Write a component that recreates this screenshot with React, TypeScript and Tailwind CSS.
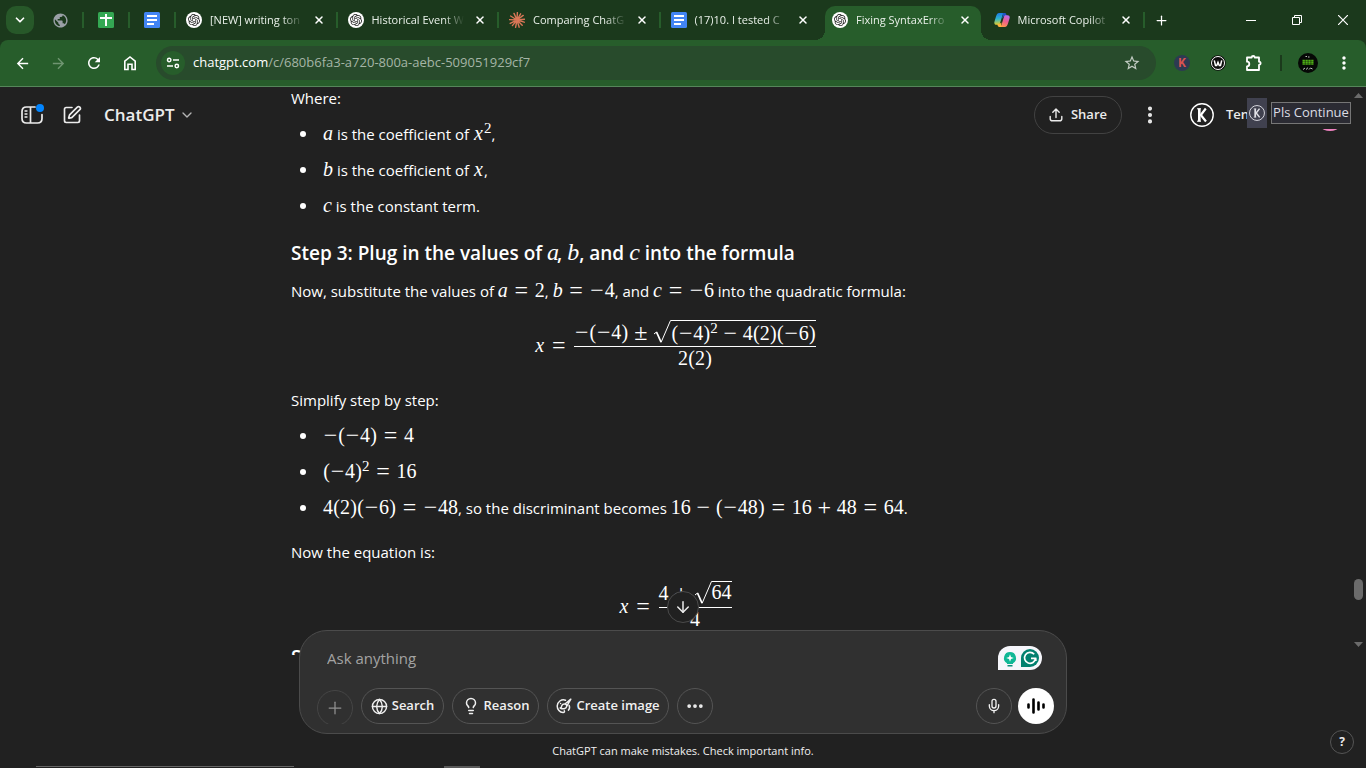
import type { ReactNode } from "react";
import {
  ArrowDown,
  ChevronDown,
  Ellipsis,
  EllipsisVertical,
  Globe,
  Lightbulb,
  Mic,
  Plus,
  SquarePen,
  X,
} from "lucide-react";
import { MdArrowBack, MdArrowForward, MdMoreVert, MdPublic, MdRefresh, MdStarBorder } from "react-icons/md";
import { SiOpenai } from "react-icons/si";

/* ---------- favicons ---------- */

function OpenAiFavicon() {
  return (
    <span className="flex size-4 shrink-0 items-center justify-center rounded-full bg-white text-[#222]">
      <SiOpenai size={12} />
    </span>
  );
}

function DocsFavicon() {
  return (
    <svg viewBox="0 0 16 16" className="size-4 shrink-0" aria-hidden="true">
      <rect width="16" height="16" rx="1.5" fill="#4285f4" />
      <path d="M3 4h10M3 8h10M3 12h7" stroke="#fff" strokeWidth="2" />
    </svg>
  );
}

function SheetsFavicon() {
  return (
    <svg viewBox="0 0 16 16" className="size-4 shrink-0" aria-hidden="true">
      <rect width="16" height="16" rx="1.5" fill="#34a853" />
      <path d="M2 6h12M8 2v12" stroke="#fff" strokeWidth="2" />
    </svg>
  );
}

function ClaudeFavicon() {
  return (
    <svg viewBox="0 0 16 16" className="size-4 shrink-0" aria-hidden="true">
      <path
        d="M8 8 8.4.5M8 8l3.6-6.2M8 8l6.2-4.6M8 8l7.5-.8M8 8l7.2 2.2M8 8l5.2 5.2M8 8l2.2 7.2M8 8l-1.4 7.4M8 8l-4.6 5.6M8 8l-6.8 3.4M8 8 .5 7.6M8 8 1.6 4M8 8 5 1.4"
        stroke="#d97757"
        strokeWidth="1.4"
        strokeLinecap="round"
      />
    </svg>
  );
}

function CopilotFavicon() {
  return (
    <svg viewBox="0 0 16 16" className="size-4 shrink-0" fill="none" aria-hidden="true">
      <defs>
        <linearGradient id="cp-a" x1="3" y1="1" x2="4" y2="13" gradientUnits="userSpaceOnUse">
          <stop stopColor="#1b78e8" />
          <stop offset=".5" stopColor="#2fb6c8" />
          <stop offset="1" stopColor="#f2cf1d" />
        </linearGradient>
        <linearGradient id="cp-b" x1="13" y1="3" x2="8" y2="15" gradientUnits="userSpaceOnUse">
          <stop stopColor="#b56cf0" />
          <stop offset=".5" stopColor="#ee5d8f" />
          <stop offset="1" stopColor="#ff9a4a" />
        </linearGradient>
      </defs>
      <path d="M9.8 1H5.2C3.4 1 2.6 2.6 2 4.5L.5 9.4C-.1 11.5.6 12.8 2.5 12.8h1.7c1 0 1.6-.6 1.9-1.7L8.4 3.4C8.7 2.4 9.2 2 10 2z" fill="url(#cp-a)" />
      <path d="M9.5 1h1.2c1 0 1.4.6 1.7 1.7l.4 1.5H10L8 6.5l.9-3.8C9 1.9 8.8 1.2 8.3 1z" fill="#1f55c4" />
      <path d="M6.2 15h4.6c1.8 0 2.6-1.6 3.2-3.5l1.5-4.9c.6-2.1-.1-3.4-2-3.4h-1.7c-1 0-1.6.6-1.9 1.700l-2.3 7.7C7.3 13.6 6.8 14 6 14z" fill="url(#cp-b)" />
      <path d="M6.5 15H5.3c-1 0-1.4-.6-1.7-1.7l-.3-1L6 11.5l1.5-1-.4 2.8c-.1.8.1 1.5.6 1.7z" fill="#ffb23e" />
    </svg>
  );
}

/* ---------- browser chrome ---------- */

interface TabProps {
  title: string;
  icon: ReactNode;
  active?: boolean;
  divider?: boolean;
}

const TABS: TabProps[] = [
  { title: "[NEW] writing ton", icon: <OpenAiFavicon />, divider: true },
  { title: "Historical Event W", icon: <OpenAiFavicon />, divider: true },
  { title: "Comparing ChatG", icon: <ClaudeFavicon />, divider: true },
  { title: "(17)10. I tested C", icon: <DocsFavicon /> },
  { title: "Fixing SyntaxErro", icon: <OpenAiFavicon />, active: true },
  { title: "Microsoft Copilot", icon: <CopilotFavicon />, divider: true },
];

function Tab({ title, icon, active, divider }: TabProps) {
  return (
    <div className="relative h-full min-w-0 flex-1">
      {active && (
        <>
          <div className="absolute inset-x-[3px] top-1.5 bottom-0 rounded-t-[10px] bg-[#275d2b]" />
          <div className="absolute bottom-0 -left-[7px] size-2.5 bg-[radial-gradient(circle_at_0_0,transparent_10px,#275d2b_10px)]" />
          <div className="absolute -right-[7px] bottom-0 size-2.5 bg-[radial-gradient(circle_at_100%_0,transparent_10px,#275d2b_10px)]" />
        </>
      )}
      <div className="relative flex h-full items-center gap-2 pr-[11px] pl-2.5">
        {icon}
        <span className="min-w-0 flex-1 overflow-hidden text-[11px] leading-4 font-medium whitespace-nowrap text-[#e9f0e9] [mask-image:linear-gradient(to_right,black_78%,transparent)]">
          {title}
        </span>
        <button type="button" aria-label={`Close ${title}`} className="flex size-4 items-center justify-center text-white">
          <X size={12} strokeWidth={3} />
        </button>
      </div>
      {divider && <span className="absolute top-3 right-0 h-4 w-0.5 bg-[#275d2b]" />}
    </div>
  );
}

function PinnedTab({ label, children }: { label: string; children: ReactNode }) {
  return (
    <button type="button" aria-label={label} className="flex h-4 w-[46px] items-center justify-center border-r-2 border-[#275d2b]">
      {children}
    </button>
  );
}

function TabStrip() {
  return (
    <div className="flex h-10 items-center">
      <button type="button" aria-label="Search tabs" className="mr-1 ml-1.5 flex size-7 items-center justify-center rounded-[10px] bg-[#275829] text-white">
        <ChevronDown size={14} strokeWidth={3} />
      </button>
      <PinnedTab label="Web page">
        <MdPublic size={17} className="text-[#9aa0a6]" />
      </PinnedTab>
      <PinnedTab label="Sheets">
        <SheetsFavicon />
      </PinnedTab>
      <PinnedTab label="Docs">
        <DocsFavicon />
      </PinnedTab>
      <div className="flex h-full min-w-0 flex-1">
        {TABS.map((t) => (
          <Tab key={t.title} {...t} />
        ))}
      </div>
      <button type="button" aria-label="New tab" className="flex h-7 w-8 items-center justify-center text-white">
        <Plus size={15} strokeWidth={2} />
      </button>
      <div className="ml-[51px] flex text-white">
        <button type="button" aria-label="Minimize" className="flex h-10 w-[46px] items-center justify-center">
          <svg viewBox="0 0 10 10" className="size-2.5"><path d="M0 5.5h10" stroke="currentColor" /></svg>
        </button>
        <button type="button" aria-label="Restore" className="flex h-10 w-[46px] items-center justify-center">
          <svg viewBox="0 0 10 10" className="size-2.5" fill="none" stroke="currentColor">
            <path d="M.5 2.5h7v7h-7zM2.5 2.5v-2h7v7h-2" />
          </svg>
        </button>
        <button type="button" aria-label="Close" className="flex h-10 w-[46px] items-center justify-center">
          <svg viewBox="0 0 10 10" className="size-2.5"><path d="m0 0 10 10M10 0 0 10" stroke="currentColor" strokeWidth="1.2" /></svg>
        </button>
      </div>
    </div>
  );
}

function ToolButton({ label, children }: { label: string; children: ReactNode }) {
  return (
    <button type="button" aria-label={label} className="flex size-9 items-center justify-center">
      {children}
    </button>
  );
}

function Toolbar() {
  return (
    <div className="flex h-[46px] items-center rounded-t-lg bg-[#275d2b] px-1 text-white">
      <ToolButton label="Back"><MdArrowBack size={17} /></ToolButton>
      <ToolButton label="Forward"><MdArrowForward size={17} className="text-[#6f9571]" /></ToolButton>
      <ToolButton label="Reload"><MdRefresh size={18} /></ToolButton>
      <ToolButton label="Home">
        <svg viewBox="0 0 16 16" className="size-4" fill="none" stroke="currentColor" strokeWidth="1.6">
          <path d="M2.8 6.2 8 2l5.2 4.2v8.3H10V9.2H6v5.3H2.8z" />
        </svg>
      </ToolButton>
      <div className="mx-2 flex h-[34px] min-w-0 flex-1 items-center rounded-full bg-[#284b2c] pr-[15px] pl-[5px]">
        <button type="button" aria-label="View site information" className="flex size-6 items-center justify-center rounded-full bg-[#275d2b]">
          <svg viewBox="0 0 14 14" className="size-3.5" fill="none" stroke="currentColor" strokeWidth="1.5">
            <circle cx="3.2" cy="4" r="1.7" />
            <path d="M7 4h6M1 10h6" />
            <circle cx="10.8" cy="10" r="1.7" />
          </svg>
        </button>
        <div role="textbox" aria-label="Address" className="ml-2 flex-1 truncate text-[13px] text-[#a5b5a6]">
          <span className="text-white">chatgpt.com</span>/c/680b6fa3-a720-800a-aebc-509051929cf7
        </div>
        <button type="button" aria-label="Bookmark this tab">
          <MdStarBorder size={18} className="text-[#c3cdc4]" />
        </button>
      </div>
      <ToolButton label="K extension">
        <span className="flex size-4 items-center justify-center rounded-full bg-[#2d3a52] font-['Roboto',sans-serif] text-xs font-bold text-[#d9534f]">K</span>
      </ToolButton>
      <ToolButton label="W extension">
        <svg viewBox="0 0 16 16" className="size-4" fill="none">
          <circle cx="8" cy="8" r="7.8" fill="#0b0b0b" />
          <circle cx="8" cy="8" r="6.5" stroke="#fff" strokeWidth="1" />
          <path d="m4.300 5.300 1.200 5.200h1.200L8 7.200l1.300 3.300h1.200l1.200-5.200" stroke="#fff" strokeWidth="1.500" />
        </svg>
      </ToolButton>
      <ToolButton label="Extensions">
        <svg viewBox="0 0 18 18" className="size-[18px]" fill="none" stroke="currentColor" strokeWidth="1.8" strokeLinejoin="round">
          <path d="M2 3.5h4.7a1.5 1.5 0 0 1 3 0H14v4.2a1.6 1.6 0 0 1 0 3.2V16H2v-3.700a2.3 2.3 0 0 0 0-4.6z" />
        </svg>
      </ToolButton>
      <span className="mx-2 h-4 w-0.5 bg-[#1b3a1c]" />
      <ToolButton label="Profile">
        <svg viewBox="0 0 20 20" className="size-5" fill="none">
          <circle cx="10" cy="10" r="10" fill="#060806" />
          <path d="M7.5 3.5h1.500M10 4h1.500M5 16.5l2-1.5M8 16.5l2-1.8M11 16.5l1.5-1.5 2 1" stroke="#bfc4bf" strokeWidth="1" />
          <path d="M4.500 7.500h11M4.500 9.200h11M4.500 10.900h11" stroke="#4fae16" strokeWidth="1.5" strokeDasharray="2.4 .5" />
        </svg>
      </ToolButton>
      <ToolButton label="Chrome menu"><MdMoreVert size={20} /></ToolButton>
    </div>
  );
}

/* ---------- math typesetting ---------- */

const GLYPH_CLASS: Record<string, string> = {
  "=": "inline-block w-[15px] mx-1.5 text-center text-2xl leading-none align-[-1px]",
  "−": "inline-block w-[15px] text-center text-2xl leading-none align-[-1px]",
  "-": "inline-block w-[15px] mx-[5px] text-center text-2xl leading-none align-[-1px]",
  "+": "inline-block w-[15px] mx-[5px] text-center text-2xl leading-none align-[-1px]",
  "±": "inline-block w-[15px] mx-[5px] text-center text-2xl leading-none align-[-1px]",
  "(": "inline-block w-[7px] text-center",
  ")": "inline-block w-[7px] text-center",
  x: "inline-block w-[11px] text-center italic",
  a: "inline-block w-2.5 text-center italic",
  b: "italic",
  c: "italic",
};

/** Sets a formula glyph by glyph: "−" is a sign, "-" a subtraction, "^2" a square. */
function Tex({ children, large }: { children: string; large?: boolean }) {
  const glyphs = children.match(/\^.|\S/g) ?? [];
  return (
    <span
      className={
        large
          ? "font-['Liberation_Serif',serif] text-2xl leading-none font-normal whitespace-nowrap"
          : "font-['Liberation_Serif',serif] text-xl leading-none whitespace-nowrap"
      }
    >
      {glyphs.map((g, i) =>
        g[0] === "^" ? (
          <sup key={i}>{g[1]}</sup>
        ) : (
          <span key={i} className={GLYPH_CLASS[g]}>
            {g === "-" ? "−" : g}
          </span>
        ),
      )}
    </span>
  );
}

function Sqrt({ children }: { children: string }) {
  return (
    <span className="inline-flex h-6">
      <svg viewBox="0 0 18 24" className="h-6 w-[18px]" fill="none" stroke="currentColor">
        <path d="m1 14 2.5-2" strokeWidth="1" />
        <path d="m3.5 12 4.5 10" strokeWidth="1.8" />
        <path d="M8 22.5 17.5.5h.5" strokeWidth="1" />
      </svg>
      <span className="border-t border-white leading-5">
        <Tex>{children}</Tex>
      </span>
    </span>
  );
}

function Equation({ numerator, denominator }: { numerator: ReactNode; denominator: string }) {
  return (
    <div className="mt-[13px] mb-[15px] flex items-center justify-center">
      <Tex>x =</Tex>
      <div className="ml-0.5">
        <div className="box-content flex h-7 items-center border-b border-white">{numerator}</div>
        <div className="h-6 text-center leading-6">
          <Tex>{denominator}</Tex>
        </div>
      </div>
    </div>
  );
}

function Bullet({ children }: { children: ReactNode }) {
  return (
    <li className="mt-2 flex items-center">
      <span className="mr-[17px] ml-[9px] size-1.5 rounded-full bg-white" />
      <span>{children}</span>
    </li>
  );
}

/* ---------- chat page ---------- */

function Answer() {
  return (
    <article className="mx-auto -mt-[3px] w-full max-w-3xl text-[15px] leading-7 text-white">
      <p>Where:</p>
      <ul>
        <Bullet><Tex>a</Tex> is the coefficient of <Tex>x^2</Tex>,</Bullet>
        <Bullet><Tex>b</Tex> is the coefficient of <Tex>x</Tex>,</Bullet>
        <Bullet><Tex>c</Tex> is the constant term.</Bullet>
      </ul>
      <h3 className="mt-[19px] text-[19px] leading-7 font-semibold">
        Step 3: Plug in the values of <Tex large>a</Tex>, <Tex large>b</Tex>, and <Tex large>c</Tex> into the formula
      </h3>
      <p className="mt-2.5">
        Now, substitute the values of <Tex>a = 2</Tex>, <Tex>b = −4</Tex>, and <Tex>c = −6</Tex> into the quadratic formula:
      </p>
      <Equation
        numerator={
          <>
            <Tex>−(−4) ±</Tex>
            <Sqrt>(−4)^2 - 4(2)(−6)</Sqrt>
          </>
        }
        denominator="2(2)"
      />
      <p>Simplify step by step:</p>
      <ul>
        <Bullet><Tex>−(−4) = 4</Tex></Bullet>
        <Bullet><Tex>(−4)^2 = 16</Tex></Bullet>
        <Bullet>
          <Tex>4(2)(−6) = −48</Tex>, so the discriminant becomes <Tex>16 - (−48) = 16 + 48 = 64</Tex>.
        </Bullet>
      </ul>
      <p className="mt-4">Now the equation is:</p>
      <Equation
        numerator={
          <>
            <Tex>4 ±</Tex>
            <Sqrt>64</Sqrt>
          </>
        }
        denominator="4"
      />
      <h3 className="-mt-1 text-[19px] leading-7 font-semibold">Step 4</h3>
    </article>
  );
}

function ScrollTrack() {
  return (
    <div className="flex w-4 flex-col items-center pt-1.5 pb-2" aria-hidden="true">
      <svg viewBox="0 0 9 5" className="h-[5px] w-[9px]"><path d="M0 5 4.5 0 9 5z" fill="#6b6b6b" /></svg>
      <span className="mt-auto h-[21px] w-[9px] rounded-full bg-[#6b6b6b]" />
      <svg viewBox="0 0 9 5" className="mt-[42px] h-[5px] w-[9px]"><path d="M0 0 4.5 5 9 0z" fill="#6b6b6b" /></svg>
    </div>
  );
}

function KBadge({ className }: { className: string }) {
  return (
    <svg viewBox="0 0 24 24" className={className} fill="none" stroke="currentColor">
      <circle cx="12" cy="12" r="11.2" strokeWidth="1.4" />
      <path d="M9.300 5.500v13" strokeWidth="2.6" />
      <path d="m15.8 5.500-5 6.500 5.200 6.500" strokeWidth="2.2" />
      <path d="M7 5.800h4M7 18.200h4" strokeWidth="1" />
    </svg>
  );
}

function ChatHeader() {
  return (
    <header className="absolute inset-x-0 top-0 flex h-14 items-center pl-3 text-[#ececec]">
      <button type="button" aria-label="Open sidebar" className="relative flex size-10 items-center justify-center">
        <svg viewBox="0 0 22 18" className="h-[18px] w-[22px]" fill="none" stroke="currentColor" strokeWidth="1.7" strokeLinecap="round">
          <path d="M14 1H5.500C2.500 1 1 2.500 1 5.500v7C1 15.500 2.500 17 5.500 17h11c3 0 4.500-1.500 4.500-4.500V8.500M9.500 1v16" />
          <path d="M4 5h2M4 8h2M4 11h2" strokeWidth="1.3" />
        </svg>
        <span className="absolute top-[9px] right-2 size-2 rounded-full bg-[#0285ff]" />
      </button>
      <button type="button" aria-label="New chat" className="flex size-10 items-center justify-center">
        <SquarePen size={20} />
      </button>
      <button type="button" className="ml-3 flex items-center gap-1 text-[17px] font-semibold">
        ChatGPT
        <ChevronDown size={16} className="text-[#b4b4b4]" />
      </button>
      <button type="button" className="ml-auto flex h-[38px] w-22 items-center justify-center gap-2 rounded-full border border-[#424242] text-[13px] font-semibold">
        <svg viewBox="0 0 14 14" className="size-3.5" fill="none" stroke="currentColor" strokeWidth="1.4" strokeLinecap="round" strokeLinejoin="round">
          <path d="M7 9.500V1.200M3.800 4.200 7 1l3.200 3.200M1.200 8.500v2.200c0 1.400.7 2.100 2.100 2.100h7.400c1.400 0 2.100-.7 2.100-2.100V8.500" />
        </svg>
        Share
      </button>
      <button type="button" aria-label="More options" className="ml-2 flex size-10 items-center justify-center">
        <EllipsisVertical size={22} strokeWidth={2.5} />
      </button>
      <div className="ml-5 flex items-center gap-3 text-[13px] font-semibold">
        <KBadge className="size-6 text-white" />
        <span className="w-[21px]">Ten</span>
      </div>
      <div className="relative flex h-14 w-[119px] items-start">
        <span className="absolute top-3 left-[67px] size-8 rounded-full bg-[#ee82c0]" />
        <span className="relative mt-[11px] flex h-[30px] w-5 items-center justify-center bg-[#40414f]">
          <KBadge className="size-4 text-[#e0e0e6]" />
        </span>
        <div className="relative mt-2 flex h-[34px] w-[85px] items-start bg-[#212121] pt-[7px] pl-1">
          <div role="tooltip" className="flex h-[22px] w-20 items-center justify-center border border-[#767676] bg-[#2b2b33] text-[13px] whitespace-nowrap text-[#dcdce4]">
            Pls Continue
          </div>
        </div>
      </div>
    </header>
  );
}

function Pill({ icon, className, children }: { icon: ReactNode; className: string; children: ReactNode }) {
  return (
    <button
      type="button"
      className={`flex h-9 items-center justify-center gap-1 rounded-full border border-[#545454] text-[13px] font-semibold whitespace-nowrap text-[#f0f0f0] ${className}`}
    >
      {icon}
      {children}
    </button>
  );
}

function Grammarly() {
  return (
    <svg viewBox="0 0 44 24" className="h-6 w-11" fill="none">
      <path d="M0 12A12 12 0 0 1 12 0h20a12 12 0 0 1 0 24H0z" fill="#f6f6fb" />
      <path d="M12 6a6 6 0 0 1 3 11.200v.8H9v-.8A6 6 0 0 1 12 6z" fill="#0fb795" />
      <path d="M9.500 19h5v1.500h-5z" fill="#0a8f78" />
      <path d="m12 8.200 1 2.800 2.800 1-2.800 1-1 2.800-1-2.800-2.800-1 2.800-1z" fill="#fff" />
      <path d="M23 12a9 9 0 1 1 9 9h-9z" fill="#02806f" />
      <path d="M36.200 8.300A5.500 5.500 0 1 0 37.500 12.300h-4.500M37.800 15v-2.700" stroke="#fff" strokeWidth="1.7" />
    </svg>
  );
}

function Composer() {
  return (
    <div className="relative -mt-[25px] px-4">
      <form className="relative mx-auto flex w-full max-w-3xl flex-col rounded-[28px] border border-[#4b4b4b] bg-[#303030] pt-[15px] pr-3 pb-[9px] pl-[17px]">
        <button
          type="button"
          aria-label="Scroll to bottom"
          className="absolute bottom-full left-1/2 mb-2 flex size-8 -translate-x-1/2 items-center justify-center rounded-full border border-[#4b4b4b] bg-[#212121] text-[#ececec]"
        >
          <ArrowDown size={18} />
        </button>
        <input
          type="text"
          aria-label="Message"
          placeholder="Ask anything"
          className="ml-2.5 h-6 bg-transparent text-[15px] text-white outline-none placeholder:text-[#a3a3a3]"
        />
        <div className="absolute top-[15px] right-6">
          <Grammarly />
        </div>
        <div className="mt-[18px] flex h-9 items-start gap-2 overflow-hidden">
          <button type="button" aria-label="Add files" className="mt-0.5 flex size-9 shrink-0 items-center justify-center rounded-full border border-[#454545] text-[#909090]">
            <Plus size={20} strokeWidth={1.5} />
          </button>
          <Pill className="w-[83px]" icon={<Globe size={17} />}>Search</Pill>
          <Pill
            className="w-[87px]"
            icon={<Lightbulb size={18} />}
          >
            Reason
          </Pill>
          <Pill
            className="w-[122px]"
            icon={
              <svg viewBox="0 0 16 16" className="size-4" fill="none" stroke="currentColor" strokeWidth="1.5" strokeLinecap="round" strokeLinejoin="round">
                <path d="M9.500 2.200A6.300 6.300 0 0 0 1.200 8c0 3.500 2.600 6.400 5.800 6.600 1.500.1 1.700-1 1.300-1.900" />
                <path d="M14.800 1.200 9 6M14.800 1.200 10.800 8.200M9 6c-1.600-.4-3 .6-3.300 2-.2 1.200-.7 1.700-1.500 2 2.600 1.600 6.200.8 6.600-1.800C10.900 7 10 6.200 9 6zM13.200 7.500c.6 1.700.4 3.500-.8 4.600M4.600 5.500v.1" />
              </svg>
            }
          >
            Create image
          </Pill>
          <button type="button" aria-label="More tools" className="flex size-9 items-center justify-center rounded-full border border-[#545454] text-[#f0f0f0]">
            <Ellipsis size={20} strokeWidth={2.5} />
          </button>
          <div className="ml-auto flex gap-1.5">
            <button type="button" aria-label="Dictate" className="flex size-9 items-center justify-center rounded-full border border-[#545454] text-[#f0f0f0]">
              <Mic size={16} />
            </button>
            <button type="button" aria-label="Use voice mode" className="flex size-9 items-center justify-center rounded-full bg-white text-black">
              <svg viewBox="0 0 18 16" className="h-4 w-[18px]" stroke="currentColor" strokeWidth="2.6" strokeLinecap="round">
                <path d="M1.500 6.500v3M6.500 1.500v13M11.500 4.500v7M16.500 6.500v3" />
              </svg>
            </button>
          </div>
        </div>
      </form>
      <p className="pt-1 text-center text-[11px] leading-[26px] text-[#f0f0f0]">
        ChatGPT can make mistakes. Check important info.
      </p>
    </div>
  );
}

export default function App() {
  return (
    <div className="flex h-screen flex-col overflow-hidden bg-[#1b391c] font-['Open_Sans','Noto_Sans',sans-serif]">
      <TabStrip />
      <Toolbar />
      <div className="relative flex min-h-0 flex-1 flex-col border-t border-[#55865a] bg-[#212121]">
        <main className="flex min-h-0 flex-1">
          <div className="min-w-0 flex-1 overflow-hidden">
            <Answer />
          </div>
          <ScrollTrack />
        </main>
        <ChatHeader />
        <Composer />
        <div className="h-1" />
        <button type="button" aria-label="Help" className="absolute right-3 bottom-3.5 flex size-6 items-center justify-center rounded-full border border-[#555] text-xs font-bold text-[#ececec]">
          ?
        </button>
        {/* top edges of the status bubble and the panel that sit below the fold */}
        <span className="absolute bottom-0 left-9 h-0.5 w-[258px] border-t border-[#666]" />
        <span className="absolute bottom-0 left-[444px] h-0.5 w-9 bg-[#5a5a5a]" />
      </div>
    </div>
  );
}
